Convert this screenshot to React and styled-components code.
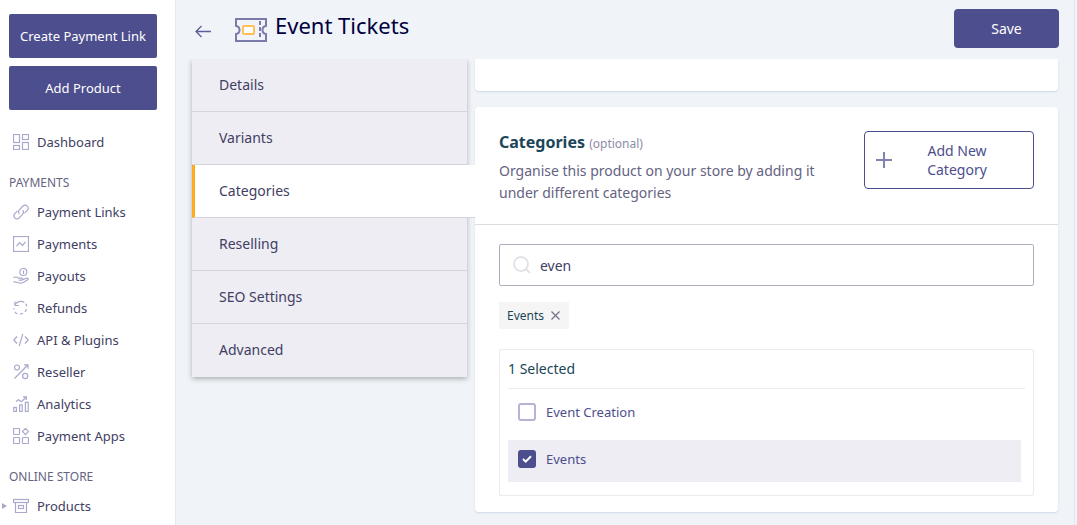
import React, { useState } from 'react';
import styled, { createGlobalStyle, css } from 'styled-components';

const GlobalStyle = createGlobalStyle`
  * {
    box-sizing: border-box;
  }
  body {
    margin: 0;
    background-color: #f0f4f8;
    color: #414063;
    font-family: 'Noto Sans', 'Open Sans', sans-serif;
    font-size: 14px;
  }
  button,
  input {
    margin: 0;
    font-family: inherit;
  }
  h1,
  h2,
  p,
  ul {
    margin: 0;
    padding: 0;
  }
`;

const Page = styled.div`
  display: flex;
  height: 100vh;
  overflow: hidden;
`;

const Sidebar = styled.aside`
  flex: 0 0 176px;
  overflow: hidden;
  background-color: #ffffff;
  border-right: 1px solid #e4e8f0;
`;

const SidebarActions = styled.div`
  display: flex;
  flex-direction: column;
  gap: 8px;
  padding: 14px 18px 16px 9px;
`;

const Button = styled.button`
  height: 44px;
  padding: 0 8px;
  border: 0;
  border-radius: 2px;
  background-color: #4d4e8e;
  color: #ffffff;
  font-size: 13px;
  cursor: pointer;
  white-space: nowrap;
`;

const NavHeading = styled.h2`
  padding: 15px 0 3px 9px;
  color: #65637f;
  font-size: 12px;
  font-weight: 400;
  line-height: 20px;
  text-transform: uppercase;
`;

const NavList = styled.ul`
  list-style: none;
`;

const NavLink = styled.a`
  display: flex;
  align-items: center;
  height: 32px;
  padding-left: 2px;
  color: #414063;
  font-size: 13px;
  text-decoration: none;
  white-space: nowrap;
`;

const CaretSlot = styled.span`
  display: flex;
  width: 11px;
`;

const NavIcon = styled.svg`
  width: 16px;
  height: 16px;
  margin-right: 8px;
  fill: none;
  stroke: #a9a8cd;
  stroke-width: 1.2;
`;

const Main = styled.main`
  display: flex;
  flex: 1;
  flex-direction: column;
  min-width: 0;
  margin-right: 2px;
  border-right: 1px solid #e1e6ea;
`;

const Header = styled.header`
  display: flex;
  align-items: flex-start;
  flex-shrink: 0;
  height: 59px;
  padding: 9px 15px 0 16px;
`;

const BackButton = styled.button`
  display: flex;
  padding: 14px 3px;
  border: 0;
  background: none;
  cursor: pointer;
`;

const Title = styled.h1`
  display: flex;
  flex: 1;
  align-items: flex-end;
  gap: 8px;
  padding-left: 21px;
  color: #000041;
  font-size: 22px;
  font-weight: 400;
  line-height: 33px;
`;

const SaveButton = styled(Button)`
  width: 105px;
  height: 39px;
  border-radius: 4px;
  font-size: 14px;
`;

const Content = styled.div`
  display: flex;
  flex: 1;
  align-items: flex-start;
  gap: 8px;
  min-height: 0;
  padding: 0 16px;
  overflow: hidden;
`;

const Tabs = styled.nav`
  display: flex;
  flex: 0 0 275px;
  flex-direction: column;
  background-color: #eeedf3;
  box-shadow: 0 2px 5px rgba(0, 0, 0, 0.28);
`;

const Tab = styled.button`
  height: 53px;
  padding: 0 27px 2px;
  border: 0;
  border-bottom: 1px solid #d6d5dd;
  background: none;
  color: #414063;
  font-size: 14px;
  text-align: left;
  cursor: pointer;
  &:last-child {
    border-bottom-color: transparent;
  }
  ${({ $active }) => $active && css`
    z-index: 1;
    margin-right: -8px;
    padding-left: 24px;
    border-left: 3px solid #ffab1a;
    background-color: #ffffff;
  `}
`;

const Panels = styled.div`
  display: flex;
  flex: 1;
  flex-direction: column;
  gap: 16px;
  min-width: 0;
`;

const Card = styled.section`
  border-radius: 4px;
  background-color: #ffffff;
  box-shadow: 0 1px 2px #cfd8e6;
`;

const PreviousCard = styled(Card)`
  height: 32px;
  border-radius: 0 0 4px 4px;
`;

const CardHeader = styled.div`
  display: flex;
  align-items: flex-start;
  gap: 32px;
  padding: 24px 24px 20px;
  border-bottom: 1px solid #dbdbe0;
`;

const CardIntro = styled.div`
  flex: 1;
`;

const CardTitle = styled.h2`
  margin-bottom: 5px;
  color: #1b4558;
  font-size: 16px;
  font-weight: 700;
  line-height: 22px;
`;

const Optional = styled.span`
  color: #8e8ca6;
  font-size: 12px;
  font-weight: 400;
`;

const Description = styled.p`
  color: #65637f;
  font-size: 14px;
  line-height: 22px;
`;

const OutlineButton = styled.button`
  display: flex;
  align-items: center;
  width: 170px;
  height: 58px;
  padding: 0 11px;
  border: 1px solid #4d4e8e;
  border-radius: 4px;
  background-color: #ffffff;
  color: #4d4e8e;
  font-size: 14px;
  line-height: 19px;
  cursor: pointer;
`;

const OutlineLabel = styled.span`
  flex: 1;
  padding: 0 32px;
`;

const CardBody = styled.div`
  padding: 19px 24px 16px;
`;

const SearchBox = styled.label`
  display: flex;
  align-items: center;
  gap: 9px;
  height: 42px;
  padding: 0 13px;
  border: 1px solid #afaebf;
  border-radius: 2px;
`;

const SearchInput = styled.input`
  flex: 1;
  min-width: 0;
  padding: 0;
  border: 0;
  outline: 0;
  background: none;
  color: #414063;
  font-size: 14px;
`;

const Chips = styled.div`
  display: flex;
  gap: 8px;
  margin: 16px 0 20px;
`;

const Chip = styled.span`
  display: flex;
  align-items: center;
  gap: 6px;
  height: 27px;
  padding: 0 8px;
  background-color: #f5f5f5;
  color: #1b4558;
  font-size: 12px;
`;

const ChipRemove = styled.button`
  display: flex;
  padding: 0;
  border: 0;
  background: none;
  cursor: pointer;
`;

const Options = styled.div`
  padding: 0 8px 8px;
  border: 1px solid #ebebee;
  border-radius: 2px;
`;

const OptionsTitle = styled.p`
  margin-bottom: 4px;
  border-bottom: 1px solid #ebebf0;
  color: #1b4558;
  font-size: 14px;
  line-height: 38px;
`;

const Option = styled.label`
  display: flex;
  align-items: flex-start;
  gap: 10px;
  height: 42px;
  margin: 0 4px 5px 0;
  padding: 10px;
  background-color: ${({ $checked }) => ($checked ? '#eeedf3' : 'transparent')};
  color: #4d4e8e;
  font-size: 13px;
  line-height: 18px;
  cursor: pointer;
`;

const Tick = styled.span`
  display: grid;
  place-items: center;
  & > * {
    grid-area: 1 / 1;
  }
  svg {
    pointer-events: none;
  }
`;

const Checkbox = styled.input`
  width: 18px;
  height: 18px;
  border: 2px solid #b5b4d4;
  border-radius: 3px;
  background-color: #ffffff;
  appearance: none;
  &:checked {
    border-color: #4d4e8e;
    background-color: #4d4e8e;
  }
`;

const icons = {
  dashboard: (
    <>
      <rect x='0.5' y='0.5' width='6' height='8' />
      <rect x='9.5' y='0.5' width='6' height='5' />
      <rect x='0.5' y='11.5' width='6' height='4' />
      <rect x='9.5' y='8.5' width='6' height='7' />
    </>
  ),
  link: (
    <>
      <path d='M6.4 9.8C5.2 8.4 5.4 6.8 6.5 5.6l3.7-3.8a3.1 3.1 0 0 1 4.3 4.4l-3 3' />
      <path d='M9.6 6.2c1.2 1.4 1 3-.1 4.2l-3.7 3.8a3.1 3.1 0 0 1-4.3-4.4l3-3' />
    </>
  ),
  payments: (
    <>
      <rect x='0.5' y='0.5' width='15' height='15' />
      <path d='M3.5 10.2 6.6 6.6l2.8 2.8 3.2-3.5' />
    </>
  ),
  payouts: (
    <>
      <circle cx='10.3' cy='4' r='3.5' />
      <path d='M9.7 3h.8v3' />
      <path d='M.5 9.6c2-.9 3.8-.8 5 .6h3c1.6 0 1.5 2 0 2H5.6M9.8 11.6l3.7-1.3c1.6-.4 2.3.9 1 1.7l-4.7 2.8c-1 .5-2 .5-3 .2L.5 13.7' />
    </>
  ),
  refunds: (
    <>
      <path d='M1.8 5.2C3.5 1.6 8 .4 11.4 2.4M2 1.5v4h4' />
      <path d='M12.8 3.6a7 7 0 0 1-10 9.3A7 7 0 0 1 1 8' strokeDasharray='3 2.6' />
    </>
  ),
  code: (
    <path d='M4 4.5.8 8 4 11.5M12 4.5 15.2 8 12 11.5M9.8 1.8 6.2 14.2' />
  ),
  reseller: (
    <>
      <circle cx='4' cy='3.5' r='2.5' />
      <circle cx='12.2' cy='12' r='2.6' />
      <path d='M1.5 14.5 14.8 1M11 .8h4v3.9' />
    </>
  ),
  analytics: (
    <>
      <rect x='0.8' y='11.5' width='2.6' height='4' />
      <rect x='6.6' y='9' width='2.6' height='6.5' />
      <rect x='12.4' y='6.3' width='2.8' height='9.2' />
      <path d='M3 5.5 5.4 3.8l3 2L12.8 1.5M10 .9h3.3v3.2' />
    </>
  ),
  apps: (
    <>
      <rect x='0.5' y='0.5' width='6' height='6' rx='0.8' />
      <rect x='0.5' y='9.5' width='6' height='6' rx='0.8' />
      <rect x='9.5' y='9.5' width='6' height='6' rx='0.8' />
      <path d='m12.5.4 3 3.1-3 3.1-3-3.1z' />
    </>
  ),
  products: (
    <>
      <rect x='0.5' y='1.5' width='15' height='3' />
      <path d='M2.5 4.5v10h11v-10' />
      <rect x='5.5' y='7.5' width='5' height='3' />
    </>
  ),
};

const paymentLinks = [
  { icon: 'link', label: 'Payment Links' },
  { icon: 'payments', label: 'Payments' },
  { icon: 'payouts', label: 'Payouts' },
  { icon: 'refunds', label: 'Refunds' },
  { icon: 'code', label: 'API & Plugins' },
  { icon: 'reseller', label: 'Reseller' },
  { icon: 'analytics', label: 'Analytics' },
  { icon: 'apps', label: 'Payment Apps' },
];

const tabs = ['Details', 'Variants', 'Categories', 'Reselling', 'SEO Settings', 'Advanced'];

const categories = ['Event Creation', 'Events'];

const NavItem = ({ icon, label, expandable }) => (
  <li>
    <NavLink href='#'>
      <CaretSlot>
        {expandable && (
          <svg width='5' height='6' viewBox='0 0 5 6' fill='#a9a8cd'>
            <path d='M0 0l5 3-5 3z' />
          </svg>
        )}
      </CaretSlot>
      <NavIcon viewBox='0 0 16 16'>{icons[icon]}</NavIcon>
      {label}
    </NavLink>
  </li>
);

const TicketIcon = () => (
  <svg width='32' height='24' viewBox='0 0 32 24' fill='none' stroke='#7b7bab' strokeWidth='2'>
    <path d='M1 1h30v7c-2 .3-3.500 2-3.500 4s1.500 3.700 3.500 4v7H1v-7c2-.3 3.500-2 3.500-4S3 8.300 1 8z' />
    <path d='M25 3v18' strokeDasharray='4 2' />
    <rect x='8' y='8' width='11' height='8' rx='1' fill='#ffffff' stroke='#ffc05a' />
  </svg>
);

const App = () => {
  const [activeTab, setActiveTab] = useState('Categories');
  const [query, setQuery] = useState('even');
  const [selected, setSelected] = useState(['Events']);

  const toggle = (name) => {
    setSelected(selected.includes(name) ? selected.filter((s) => s !== name) : [...selected, name]);
  };

  return (
    <Page>
      <GlobalStyle />
      <Sidebar>
        <SidebarActions>
          <Button type='button'>Create Payment Link</Button>
          <Button type='button'>Add Product</Button>
        </SidebarActions>
        <nav>
          <NavList>
            <NavItem icon='dashboard' label='Dashboard' />
          </NavList>
          <NavHeading>Payments</NavHeading>
          <NavList>
            {paymentLinks.map((item) => (
              <NavItem key={item.label} {...item} />
            ))}
          </NavList>
          <NavHeading>Online Store</NavHeading>
          <NavList>
            <NavItem icon='products' label='Products' expandable />
          </NavList>
        </nav>
      </Sidebar>

      <Main>
        <Header>
          <BackButton type='button' aria-label='Back'>
            <svg width='16' height='16' viewBox='0 0 16 16' fill='none' stroke='#5d5d98' strokeWidth='1.3'>
              <path d='M16 8.500H1M6.500 3 1 8.500 6.500 14' />
            </svg>
          </BackButton>
          <Title>
            <TicketIcon />
            Event Tickets
          </Title>
          <SaveButton type='button'>Save</SaveButton>
        </Header>

        <Content>
          <Tabs>
            {tabs.map((tab) => (
              <Tab key={tab} type='button' $active={tab === activeTab} onClick={() => setActiveTab(tab)}>
                {tab}
              </Tab>
            ))}
          </Tabs>

          <Panels>
            <PreviousCard />
            <Card>
              <CardHeader>
                <CardIntro>
                  <CardTitle>
                    Categories <Optional>(optional)</Optional>
                  </CardTitle>
                  <Description>
                    Organise this product on your store by adding it under different categories
                  </Description>
                </CardIntro>
                <OutlineButton type='button'>
                  <svg width='16' height='16' viewBox='0 0 16 16' stroke='#8282b0' strokeWidth='2'>
                    <path d='M8 0v16M0 8h16' />
                  </svg>
                  <OutlineLabel>Add New Category</OutlineLabel>
                </OutlineButton>
              </CardHeader>

              <CardBody>
                <SearchBox>
                  <svg width='18' height='18' viewBox='0 0 18 18' fill='none' stroke='#dcdce2' strokeWidth='1.500'>
                    <circle cx='8' cy='8' r='7' />
                    <path d='m13 13 4 4' />
                  </svg>
                  <SearchInput
                    type='text'
                    aria-label='Search categories'
                    value={query}
                    onChange={(e) => setQuery(e.target.value)}
                  />
                </SearchBox>

                <Chips>
                  {selected.map((name) => (
                    <Chip key={name}>
                      {name}
                      <ChipRemove type='button' aria-label={`Remove ${name}`} onClick={() => toggle(name)}>
                        <svg width='11' height='11' viewBox='0 0 11 11' stroke='#77758c' strokeWidth='1.300'>
                          <path d='m1.500 1.500 8 8M9.500 1.500l-8 8' />
                        </svg>
                      </ChipRemove>
                    </Chip>
                  ))}
                </Chips>

                <Options>
                  <OptionsTitle>{selected.length} Selected</OptionsTitle>
                  {categories.map((name) => (
                    <Option key={name} $checked={selected.includes(name)}>
                      <Tick>
                        <Checkbox type='checkbox' checked={selected.includes(name)} onChange={() => toggle(name)} />
                        {selected.includes(name) && (
                          <svg width='10' height='8' viewBox='0 0 10 8' fill='none' stroke='#ffffff' strokeWidth='2'>
                            <path d='m1 4 2.700 2.600L9 1.200' />
                          </svg>
                        )}
                      </Tick>
                      {name}
                    </Option>
                  ))}
                </Options>
              </CardBody>
            </Card>
          </Panels>
        </Content>
      </Main>
    </Page>
  );
};

export default App;
